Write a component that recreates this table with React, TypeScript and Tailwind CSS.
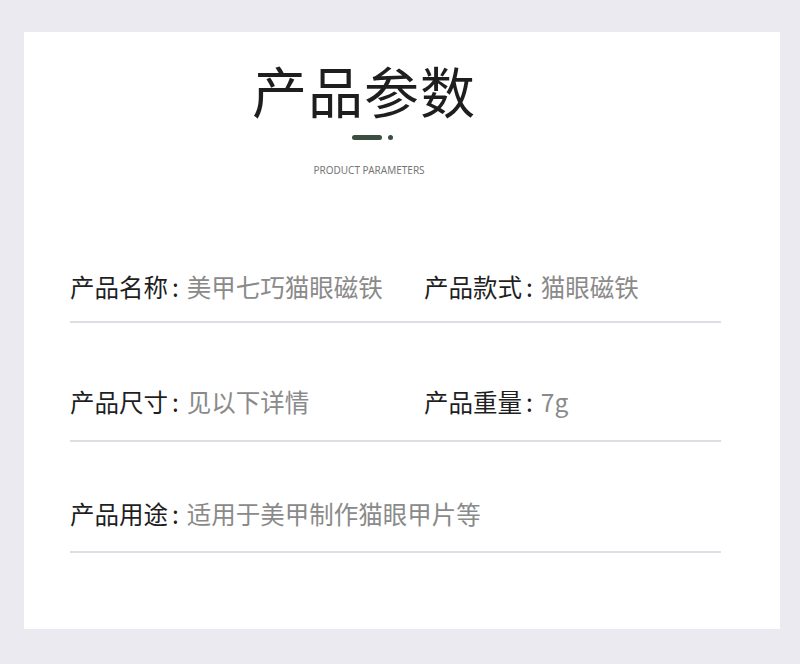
const rows = [
  {
    cls: "pb-[17px]",
    items: [
      { label: "产品名称", value: "美甲七巧猫眼磁铁" },
      { label: "产品款式", value: "猫眼磁铁" },
    ],
  },
  {
    cls: "mt-[62px] pb-[21px]",
    items: [
      { label: "产品尺寸", value: "见以下详情" },
      { label: "产品重量", value: "7g" },
    ],
  },
  {
    cls: "mt-[55px] pb-[20px]",
    items: [{ label: "产品用途", value: "适用于美甲制作猫眼甲片等" }],
  },
];

export default function App() {
  return (
    <div
      className="h-[664px] w-[800px] bg-[#ebeaf0] pl-[24px] pr-[20px] pt-[32px]"
      style={{ fontFamily: '"Noto Sans CJK SC", "Noto Sans", sans-serif' }}
    >
      <div className="h-[597px] bg-white">
        {/* heading */}
        <div className="flex flex-col items-center pr-[66px] pt-[30px]">
          <h1 className="pr-[10px] text-[55px] font-normal leading-none tracking-[1px] text-[#1e1e1e]">
            产品参数
          </h1>
          <div className="mt-[18px] flex items-center gap-[6px] pl-[6px]">
            <span className="h-[5px] w-[30px] rounded-full bg-[#3b4e40]" />
            <span className="h-[5px] w-[5px] rounded-full bg-[#3b4e40]" />
          </div>
          <p
            className="mt-[24px] text-[10px] leading-[12px] text-[#777]"
            style={{ fontFamily: '"Noto Sans", sans-serif' }}
          >
            PRODUCT PARAMETERS
          </p>
        </div>

        {/* params */}
        <div className="ml-[46px] mr-[59px] mt-[94px]">
          {rows.map((row, i) => (
            <div
              key={i}
              className={`${row.cls} grid grid-cols-[354px_1fr] border-b-2 border-[#dcdfe3]`}
            >
              {row.items.map((it) => (
                <div
                  key={it.label}
                  className="flex items-center whitespace-nowrap text-[24.5px] leading-[34px] last:first:col-span-2"
                >
                  <span className="text-[#1f1f1f]">{it.label}</span>
                  <span className="ml-[4px] text-[#1f1f1f]">:</span>
                  <span className="ml-[8px] text-[#8a8a8a]">{it.value}</span>
                </div>
              ))}
            </div>
          ))}
        </div>
      </div>
    </div>
  );
}
